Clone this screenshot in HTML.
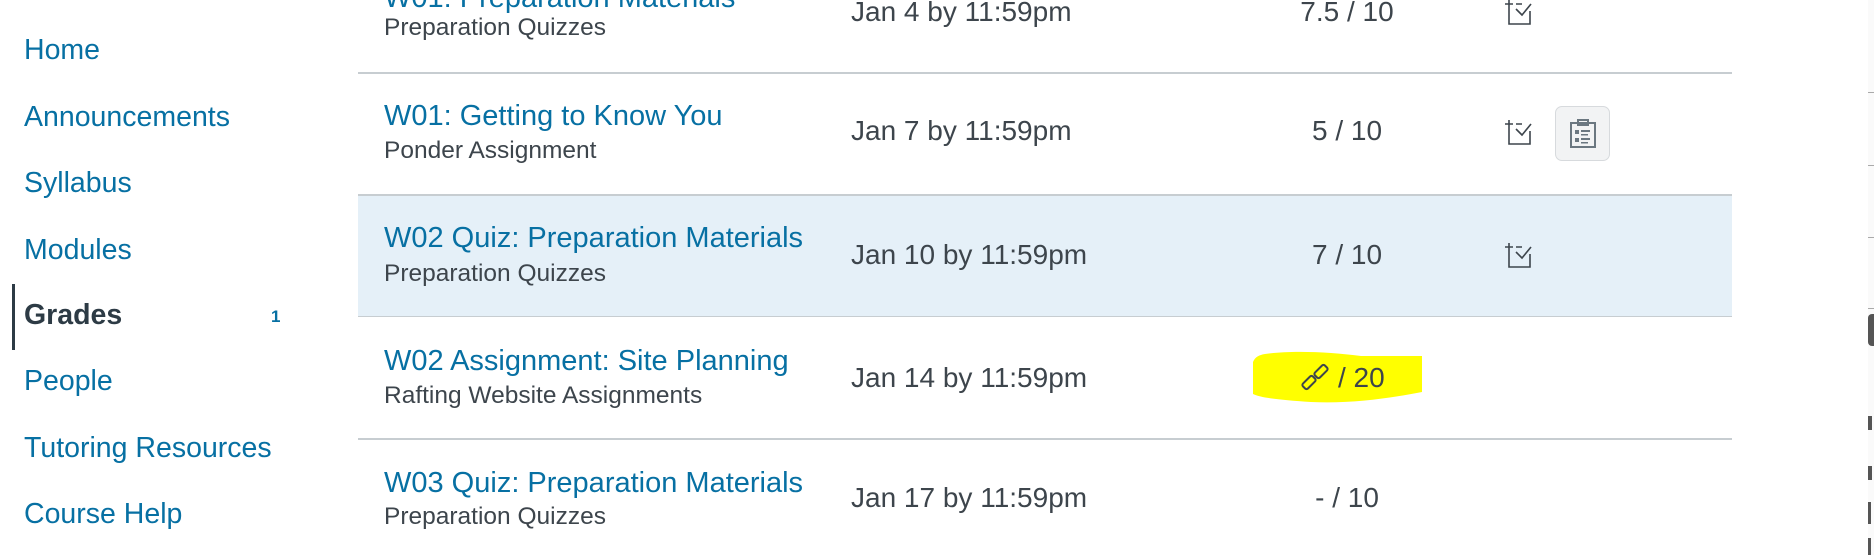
<!DOCTYPE html>
<html><head><meta charset="utf-8"><style>
body{margin:0;width:1874px;height:555px;overflow:hidden;background:#fff;font-family:"Liberation Sans",sans-serif;position:relative}
.a{position:absolute;white-space:nowrap}
.nav{left:24px;font-size:28.5px;color:#0770a3;line-height:34px}
.t{left:384px;font-size:29px;color:#0770a3;line-height:34px}
.s{left:384px;font-size:24.5px;color:#3d454c;line-height:28px}
.d{left:851px;font-size:28px;color:#3d454c;line-height:34px}
.sc{left:1247px;width:200px;text-align:center;font-size:28px;color:#3d454c;line-height:34px}
.hr{position:absolute;left:358px;width:1374px;height:2px;background:#c7cdd1}
.ic{position:absolute;left:1503px}
</style></head><body>
<div class="a" style="left:12px;top:284px;width:3px;height:66px;background:#2d3b45"></div>
<div class="a nav" style="top:33px">Home</div>
<div class="a nav" style="top:100px">Announcements</div>
<div class="a nav" style="top:166px">Syllabus</div>
<div class="a nav" style="top:233px">Modules</div>
<div class="a nav" style="top:298px;color:#2d3b45;font-weight:bold">Grades</div>
<div class="a" style="left:271px;top:307px;font-size:17px;font-weight:bold;color:#0770a3">1</div>
<div class="a nav" style="top:364px">People</div>
<div class="a nav" style="top:431px">Tutoring Resources</div>
<div class="a nav" style="top:497px">Course Help</div>

<div class="a" style="left:358px;top:195px;width:1374px;height:122px;background:#e5f0f8"></div>
<div class="hr" style="top:72px"></div>
<div class="hr" style="top:194px"></div>
<div class="hr" style="top:316px;height:1px"></div>
<div class="hr" style="top:438px"></div>

<div class="a t" style="top:-19px">W01: Preparation Materials</div>
<div class="a s" style="top:14px">Preparation Quizzes</div>
<div class="a d" style="top:-5px">Jan 4 by 11:59pm</div>
<div class="a sc" style="top:-5px">7.5 / 10</div>

<div class="a t" style="top:99px">W01: Getting to Know You</div>
<div class="a s" style="top:137px">Ponder Assignment</div>
<div class="a d" style="top:114px">Jan 7 by 11:59pm</div>
<div class="a sc" style="top:114px">5 / 10</div>

<div class="a t" style="top:221px">W02 Quiz: Preparation Materials</div>
<div class="a s" style="top:260px">Preparation Quizzes</div>
<div class="a d" style="top:238px">Jan 10 by 11:59pm</div>
<div class="a sc" style="top:238px">7 / 10</div>

<div class="a t" style="top:344px">W02 Assignment: Site Planning</div>
<div class="a s" style="top:382px">Rafting Website Assignments</div>
<div class="a d" style="top:361px">Jan 14 by 11:59pm</div>
<svg class="a" style="left:1251px;top:348px" width="172" height="58" viewBox="0 0 172 58"><path d="M14 6C40 2 80 4 110 8L171 8L171 44C140 50 100 56 60 54C30 52 10 50 2 46L2 14C4 9 8 7 14 6Z" fill="#ffff00"/></svg>
<svg class="a" style="left:1299px;top:362px" width="32" height="32" viewBox="0 0 32 32"><g fill="none" stroke="#3d454c" stroke-width="2"><rect x="3" y="17" width="14" height="7" rx="2" transform="rotate(-45 10 20.5)"/><rect x="15" y="6" width="14" height="7" rx="2" transform="rotate(-45 22 9.5)"/></g></svg>
<div class="a" style="left:1338px;top:361px;font-size:28px;color:#3d454c;line-height:34px">/ 20</div>

<div class="a t" style="top:466px">W03 Quiz: Preparation Materials</div>
<div class="a s" style="top:503px">Preparation Quizzes</div>
<div class="a d" style="top:481px">Jan 17 by 11:59pm</div>
<div class="a sc" style="top:481px">- / 10</div>

<svg class="ic" style="top:0" width="30" height="26" viewBox="0 0 30 26"><g fill="none" stroke="#3d454c" stroke-width="1.6"><path d="M2 4H10M6 0V24H27V11M13 4H19M13 9L19 15L28 4"/></g></svg>
<svg class="ic" style="top:120px" width="30" height="26" viewBox="0 0 30 26"><g fill="none" stroke="#3d454c" stroke-width="1.6"><path d="M2 4H10M6 0V24H27V11M13 4H19M13 9L19 15L28 4"/></g></svg>
<svg class="ic" style="top:243px" width="30" height="26" viewBox="0 0 30 26"><g fill="none" stroke="#3d454c" stroke-width="1.6"><path d="M2 4H10M6 0V24H27V11M13 4H19M13 9L19 15L28 4"/></g></svg>
<div class="a" style="left:1555px;top:106px;width:55px;height:55px;background:#f2f3f4;border:1px solid #d7dadd;border-radius:7px;box-sizing:border-box"></div>
<svg class="a" style="left:1569px;top:119px" width="28" height="30" viewBox="0 0 28 30"><g fill="none" stroke="#6b7780" stroke-width="2"><rect x="2" y="4" width="24" height="24"/><rect x="9" y="1" width="10" height="5"/></g><g fill="#6b7780"><rect x="6" y="11" width="4" height="4"/><rect x="6" y="19" width="4" height="4"/><rect x="12" y="11" width="9" height="2"/><rect x="12" y="15" width="7" height="1.5"/><rect x="12" y="19" width="9" height="2"/><rect x="12" y="23" width="7" height="1.5"/></g></svg>

<div class="a" style="left:1868px;top:0;width:6px;height:555px;background:#fafafa"></div>
<div class="a" style="left:1868px;top:92px;width:6px;height:1px;background:#aaa"></div>
<div class="a" style="left:1868px;top:165px;width:6px;height:1px;background:#aaa"></div>
<div class="a" style="left:1868px;top:237px;width:6px;height:1px;background:#aaa"></div>
<div class="a" style="left:1868px;top:308px;width:6px;height:1px;background:#aaa"></div>
<div class="a" style="left:1868px;top:314px;width:6px;height:32px;background:#555;border-radius:4px 0 0 4px"></div>
<div class="a" style="left:1868px;top:416px;width:4px;height:14px;background:#555"></div>
<div class="a" style="left:1868px;top:466px;width:4px;height:14px;background:#555"></div>
<div class="a" style="left:1868px;top:502px;width:3px;height:22px;background:#555"></div>
<div class="a" style="left:1868px;top:538px;width:3px;height:17px;background:#555"></div>
</body></html>
